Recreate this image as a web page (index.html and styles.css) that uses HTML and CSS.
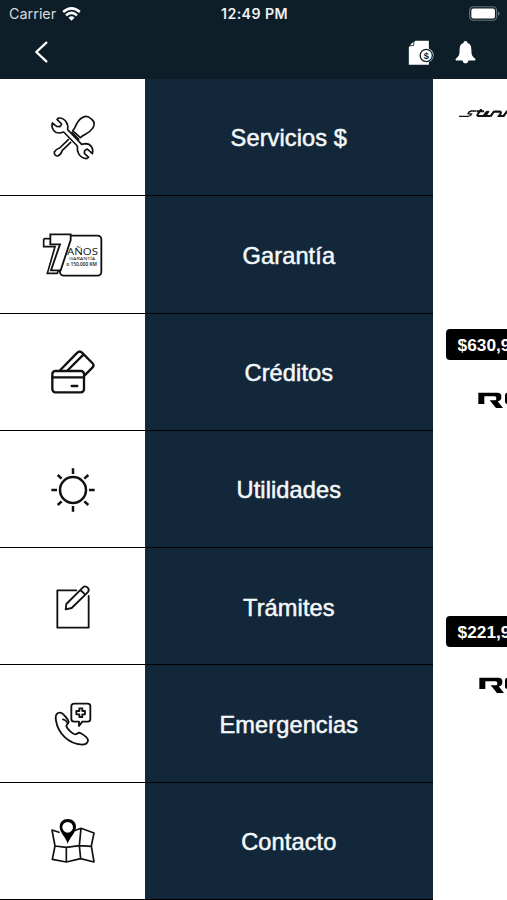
FILE: index.html
```html
<!DOCTYPE html>
<html lang="es">
<head>
<meta charset="utf-8">
<title>Menú</title>
<link rel="stylesheet" href="styles.css">
</head>
<body>
<div class="app">
  <header class="header">
    <div class="status">
      <div class="status-left">
        <span class="carrier">Carrier</span>
        <svg class="wifi" viewBox="0 0 56 42"><g fill="none" stroke="#fff" stroke-width="7.5"><path d="M3 15Q28-7 53 15"/><path d="M11.500 25Q28 10 44.500 25"/></g><path d="M19 32Q28 24 37 32L28 41Z" fill="#fff"/></svg>
      </div>
      <span class="clock">12:49 PM</span>
      <svg class="battery" viewBox="0 0 92 44"><rect x="2" y="2" width="80" height="40" rx="11" fill="none" stroke="#667077" stroke-width="3.500"/><rect x="7" y="7" width="70" height="30" rx="6" fill="#fff"/><path d="M86 15Q91 18 91 22T86 29Z" fill="#667077"/></svg>
    </div>
    <nav class="toolbar">
      <svg class="back" viewBox="0 0 42 66"><path d="M37 5L7 33L37 61" fill="none" stroke="#fff" stroke-width="7" stroke-linecap="round" stroke-linejoin="round"/></svg>
      <div class="actions">
        <svg class="invoice" viewBox="0 0 78 76"><path d="M22 2H63V75H2V22Z" fill="#fff"/><path d="M3 17L17 3V17Z" fill="#fff" stroke="#0d1e28" stroke-width="2.500"/><circle cx="55" cy="47" r="22" fill="#fff"/><circle cx="55" cy="47" r="18.500" fill="#fff" stroke="#0d1e28" stroke-width="4"/><text x="55" y="57" text-anchor="middle" font-size="28" font-weight="700" fill="#0d1e28">$</text></svg>
        <svg class="bell" viewBox="0 0 64 70"><path d="M32 0C36 0 38 3 38 6C48 9 50 18 50 29C50 43 53 47 61 53Q64 56 61 59H41Q39 68 32 68Q25 68 23 59H3Q0 56 3 53C11 47 14 43 14 29C14 18 16 9 26 6C26 3 28 0 32 0Z" fill="#fff"/></svg>
      </div>
    </nav>
  </header>
  <main class="content">
    <ul class="menu">
      <li class="row">
        <div class="icon"><svg viewBox="0 -3 225 225"><g class="line thin"><path d="M110 89C121 80 119 62 137 51C148 42 158 46 166 54C175 61 177 72 169 83C158 100 143 98 133 110Z"/><path d="M108 94L128 115M97 116L71 141Q60 144 55 153Q54 165 66 165Q75 161 79 148L104 124"/><path d="M63 55L77 69L72 77L62 76L49 66C45 82 54 97 72 96L83 93L124 135C122 153 130 171 152 173L158 169L145 157L146 149L154 144L169 158C174 143 164 128 149 128L137 130L95 86C98 68 87 50 68 51Z"/></g></svg></div>
        <div class="label">Servicios $</div>
      </li>
      <li class="row">
        <div class="icon"><svg viewBox="0 -11 225 225"><rect x="72" y="45" width="124" height="120" rx="11" class="line"/><path d="M23 54V78H57L34 158H64L68 148" fill="#fff" stroke="#111" stroke-width="5"/><path d="M23 54H44" stroke="#111" stroke-width="5"/><path d="M43 41H104V58L74 149H45L72 71H43Z" fill="#fff" stroke="#111" stroke-width="5.500"/><text class="badge-text" x="93" y="102" font-size="29" textLength="93" lengthAdjust="spacingAndGlyphs">AÑOS</text><text class="badge-text" x="99" y="119" font-size="13" textLength="79" lengthAdjust="spacingAndGlyphs">GARANTÍA</text><text class="badge-text" x="91" y="137" font-size="13" font-weight="600" textLength="92" lengthAdjust="spacingAndGlyphs">o 150,000 KM</text></svg></div>
        <div class="label">Garantía</div>
      </li>
      <li class="row">
        <div class="icon"><svg viewBox="0 -4 225 225"><g class="line thick"><path d="M73 104L124 52Q131 45 138 52L169 83Q176 90 169 97L146 120M96 104L140 60"/><rect x="49" y="107" width="95" height="64" rx="9"/><path d="M49 126H144M107 152H124"/></g></svg></div>
        <div class="label">Créditos</div>
      </li>
      <li class="row">
        <div class="icon"><svg viewBox="0 -12 225 225"><g class="line heavy"><circle cx="111" cy="102" r="39"/><path d="M111 37V54M111 150V167M46 102H63M159 102H176M65 57L77 68M157 57L145 68M65 147L77 136M157 147L145 136" stroke-linecap="butt"/></g></svg></div>
        <div class="label">Utilidades</div>
      </li>
      <li class="row">
        <div class="icon"><svg viewBox="0 -6 225 225"><g class="line"><path d="M121 58H64V170H158V75"/><path d="M91 99L141 49Q148 43 155 50Q162 57 155 64L107 111L89 115ZM133 57L148 71"/></g></svg></div>
        <div class="label">Trámites</div>
      </li>
      <li class="row">
        <div class="icon"><svg viewBox="0 -14 225 225"><g class="line"><path d="M66 67C60 70 58 79 60 90C66 128 98 160 137 162C149 162 156 157 156 148C155 142 140 131 133 127C127 124 124 130 118 131C109 130 93 114 91 106C91 101 98 99 98 93C97 87 82 70 77 67Q71 65 66 67Z"/><path d="M81 86Q89 87 94 96"/><path d="M115 39H155Q163 39 163 47V85Q163 93 155 93H139L129 106V93H115Q106 93 106 85V47Q106 39 115 39Z"/><path d="M130 53H139V61H147V71H139V79H130V71H121V61H130Z"/></g></svg></div>
        <div class="label">Emergencias</div>
      </li>
      <li class="row">
        <div class="icon"><svg viewBox="0 -7 225 225"><g class="line thin"><path d="M48 74L69 81M119 75L135 69L174 83L166 122L174 170L134 160L91 170L49 162L57 122L48 74M57 122L91 126L130 121L166 123M91 126V170M135 69L130 121L134 160"/></g><path d="M95 116C92 98 71 83 71 65C71 50 81 41 95 41C110 41 120 50 120 65C120 83 99 98 95 116Z"/><circle cx="95" cy="66" r="16" fill="#fff"/></svg></div>
        <div class="label">Contacto</div>
      </li>
    </ul>
    <section class="catalog">
      <svg class="stinger" viewBox="0 0 150 27"><g fill="none" stroke="#111" stroke-width="4"><path d="M0 22H27Q35 22 38 15L27 14Q29 7 37 6H52"/><path d="M67 0L55 18Q54 22 61 21H73L84 7M53 7H75" stroke-width="6"/><path d="M89 6L79 21H93M106 6L94 23M106 8H121Q128 8 124 15L120 21H134L145 6" stroke-width="6.500"/></g></svg>
      <div class="price first">$630,900</div>
      <svg class="rio" viewBox="0 0 100 48"><path d="M0 2H57Q69 2 69 13V16Q69 27 58 28L74 48H53L34 25H51Q54 25 54 19T49 13H18V36H0Z"/><path d="M80 10Q80 2 88 2H100V36H88Q80 36 80 29Z"/></svg>
      <div class="price second">$221,900</div>
      <svg class="rio last" viewBox="0 0 100 48"><path d="M0 2H57Q69 2 69 13V16Q69 27 58 28L74 48H53L34 25H51Q54 25 54 19T49 13H18V36H0Z"/><path d="M77 10Q77 2 85 2H100V36H85Q77 36 77 29Z"/></svg>
    </section>
  </main>
</div>
</body>
</html>
```
FILE: styles.css
```css
* { box-sizing: border-box; }
body {
  margin: 0;
  background: #fff;
  font-family: "Liberation Sans", Arial, sans-serif;
}
svg { display: block; flex: none; }
.app {
  width: 507px;
  height: 900px;
  overflow: hidden;
  display: flex;
  flex-direction: column;
}
.header {
  height: 79px;
  flex: none;
  background: #0d1e28;
  color: #fff;
}
.status {
  height: 27px;
  padding: 0 7px 0 9px;
  display: grid;
  grid-template-columns: 1fr auto 1fr;
  align-items: center;
  font-family: Inter, sans-serif;
}
.status-left { display: flex; align-items: center; gap: 6px; }
.carrier { font-size: 14.4px; color: #d5dade; }
.clock { font-size: 14.2px; font-weight: 600; letter-spacing: 0.4px; color: #eef1f3; }
.wifi { width: 19px; height: 14px; }
.battery { width: 31px; height: 15px; justify-self: end; }
.toolbar {
  height: 50px;
  padding: 0 31px 0 34px;
  display: flex;
  align-items: center;
  justify-content: space-between;
}
.back { width: 14px; height: 22px; }
.actions { display: flex; align-items: center; gap: 21px; }
.invoice { width: 26px; height: 25px; }
.bell { width: 21px; height: 23px; }
.content { flex: 1; display: flex; min-height: 0; }
.menu {
  width: 433.4px;
  flex: none;
  margin: 0;
  padding: 0;
  list-style: none;
}
.row {
  height: 117.3px;
  display: grid;
  grid-template-columns: 145.3px 1fr;
}
.icon, .label {
  display: flex;
  align-items: center;
  justify-content: center;
  border-bottom: 1px solid #000;
}
.icon { padding-left: 2px; background: #fff; }
.icon svg { width: 75px; height: 75px; }
.line {
  fill: none;
  stroke: #111;
  stroke-width: 5.5px;
  stroke-linecap: round;
  stroke-linejoin: round;
}
.thin { stroke-width: 5px; }
.thick { stroke-width: 7px; }
.heavy { stroke-width: 7.5px; }
.badge-text { font-family: "Open Sans", sans-serif; fill: #111; }
.label {
  background: #12283a;
  color: #f5f8fa;
  font-size: 23.6px;
  letter-spacing: 0.1px;
  padding: 3.5px 1px 0 0;
  -webkit-text-stroke: 0.5px #f5f8fa;
}
.catalog {
  flex: 1;
  min-width: 0;
  overflow: hidden;
  background: #fff;
  display: flex;
  flex-direction: column;
  align-items: flex-start;
}
.stinger { width: 50px; height: 9px; margin: 30px 0 0 25.6px; }
.price {
  width: 110px;
  height: 31px;
  flex: none;
  margin-left: 12.6px;
  padding-left: 11.6px;
  border-radius: 4px;
  background: #000;
  color: #fff;
  font-size: 17.3px;
  font-weight: 700;
  line-height: 32px;
}
.first { margin-top: 211px; }
.second { margin-top: 208px; }
.rio { width: 34px; height: 16px; margin: 32px 0 0 44.5px; }
.last { margin: 30px 0 0 45.5px; }
```
